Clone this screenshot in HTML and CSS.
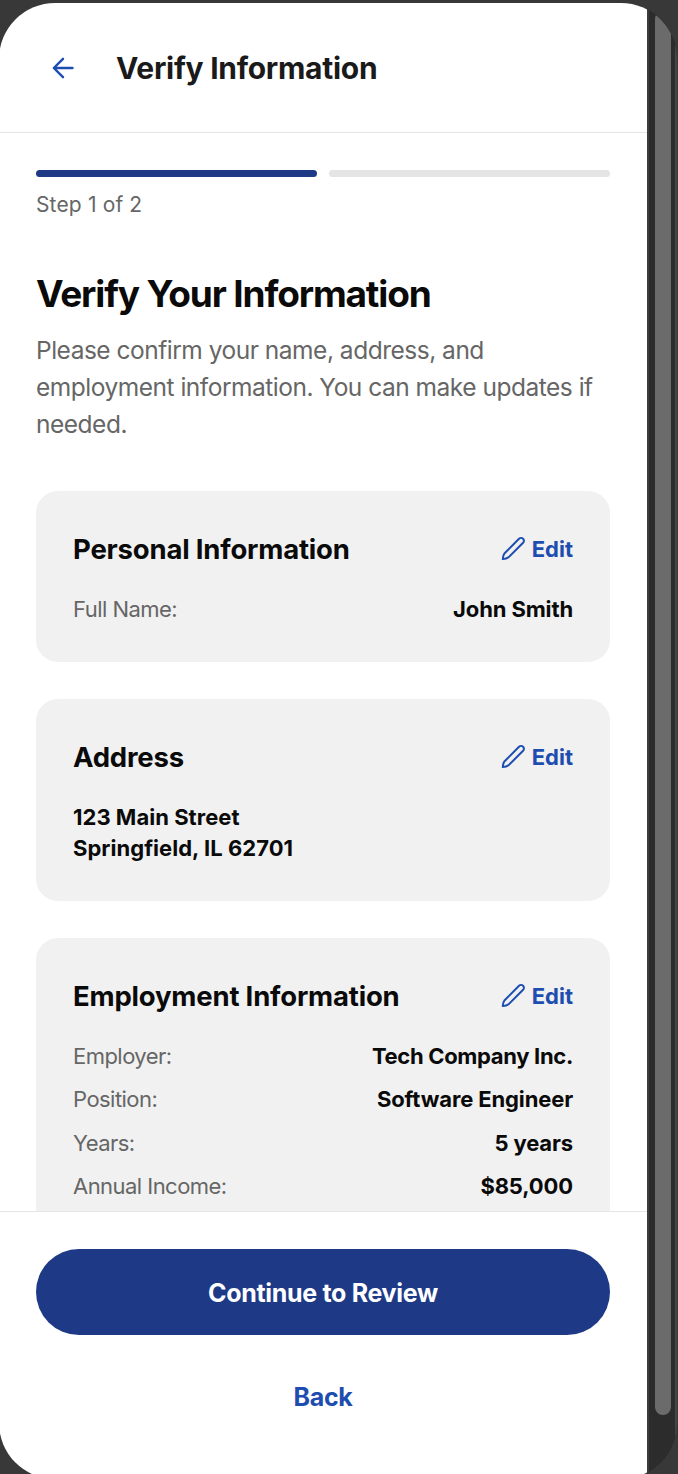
FILE: index.html
```html
<!DOCTYPE html>
<html lang="en">
<head>
<meta charset="utf-8">
<title>Verify Information</title>
<link rel="stylesheet" href="styles.css">
</head>
<body>
<svg class="defs" width="0" height="0"><symbol id="pencil" viewBox="0 0 24 24"><path d="M17.300 2.600a2.750 2.750 0 0 1 3.900 3.900L7.200 20.500Q5.400 22.100 1.700 22.200 1.800 18.600 3.500 16.500Z" fill="none" stroke="currentColor" stroke-width="1.900" stroke-linecap="round" stroke-linejoin="round"/></symbol></svg>
<div class="device">
  <div class="screen">
    <header class="header">
      <svg class="arrow" viewBox="0 0 22 22"><path d="M20.500 11H2M11 1.800 1.800 11l9.200 9.200" fill="none" stroke="currentColor" stroke-width="2.400" stroke-linecap="round" stroke-linejoin="round"/></svg>
      <span class="header-title">Verify Information</span>
    </header>
    <main class="content">
      <div class="progress"><span class="bar active"></span><span class="bar"></span></div>
      <div class="step">Step 1 of 2</div>
      <h1>Verify Your Information</h1>
      <p class="intro">Please confirm your name, address, and<br>employment information. You can make updates if<br>needed.</p>
      <section class="card personal">
        <div class="card-head"><h2>Personal Information</h2><a class="edit"><svg><use href="#pencil"/></svg>Edit</a></div>
        <div class="row"><span>Full Name:</span><b>John Smith</b></div>
      </section>
      <section class="card address">
        <div class="card-head"><h2>Address</h2><a class="edit"><svg><use href="#pencil"/></svg>Edit</a></div>
        <div class="lines"><b>123 Main Street</b><br><b>Springfield, IL 62701</b></div>
      </section>
      <section class="card employment">
        <div class="card-head"><h2>Employment Information</h2><a class="edit"><svg><use href="#pencil"/></svg>Edit</a></div>
        <div class="row"><span>Employer:</span><b class="employer">Tech Company Inc.</b></div>
        <div class="row"><span>Position:</span><b>Software Engineer</b></div>
        <div class="row"><span>Years:</span><b>5 years</b></div>
        <div class="row"><span>Annual Income:</span><b>$85,000</b></div>
      </section>
    </main>
    <footer class="footer">
      <button class="continue">Continue to Review</button>
      <a class="back">Back</a>
    </footer>
  </div>
  <div class="track"><div class="thumb"></div></div>
</div>
</body>
</html>
```
FILE: styles.css
```css
* { box-sizing: border-box; }
html { height: 1474px; overflow: hidden; background: #383838; }
body { margin: 0; height: 1474px; overflow: hidden; font-family: Inter, "Liberation Sans", sans-serif; color: #0a0a0a; }
h1, h2, p { margin: 0; }
.defs { display: block; height: 0; }
.device { display: flex; width: 678px; height: 1476px; margin: 3px 0 0 -1px; border-radius: 56px; overflow: hidden; background: #2c2c2c; }
.screen { flex: none; width: 648px; height: 100%; display: flex; flex-direction: column; background: #fff; }
.header { flex: none; height: 130px; border-bottom: 1px solid #e5e5e5; display: flex; align-items: center; padding-left: 53px; }
.arrow { width: 22px; height: 22px; color: #1e4db0; margin-right: 42px; }
.header-title { font-size: 30px; font-weight: 700; letter-spacing: -0.280px; color: #1a1a1a; white-space: nowrap; }
.content { flex: 1; min-height: 0; overflow: hidden; padding: 37px 37px 0 37px; }
.progress { display: flex; gap: 12px; }
.bar { flex: 1; height: 7px; border-radius: 4px; background: #e5e5e5; }
.active { background: #1e3a87; }
.step { font-size: 21px; line-height: 30px; margin-top: 13px; color: #666; letter-spacing: 0.150px; }
h1 { font-size: 37px; line-height: 46px; font-weight: 700; letter-spacing: -1.150px; margin-top: 51px; white-space: nowrap; }
.intro { font-size: 24.500px; line-height: 37px; margin-top: 15px; color: #666; white-space: nowrap; letter-spacing: -0.490px; }
.card { background: #f1f1f1; border-radius: 22px; padding: 36px 37px; margin-bottom: 37px; }
.personal { margin-top: 48px; height: 171px; }
.address { height: 202px; }
.employment { height: 330px; }
.card-head { display: flex; align-items: center; justify-content: space-between; height: 43px; margin-bottom: 18px; }
h2 { font-size: 27.500px; font-weight: 700; letter-spacing: -0.190px; white-space: nowrap; }
.edit { display: flex; align-items: center; gap: 6px; color: #1e4db0; font-size: 22px; font-weight: 700; letter-spacing: 0; }
.edit svg { width: 25px; height: 25px; }
.row { display: flex; justify-content: space-between; font-size: 22px; line-height: 43.300px; }
.row span { color: #666; letter-spacing: -0.540px; }
b { font-weight: 700; letter-spacing: -0.130px; }
.employer { letter-spacing: -0.320px; }
.lines { font-size: 22px; line-height: 31px; margin-top: 24px; }
.lines b { letter-spacing: 0.030px; }
.footer { flex: none; height: 268px; border-top: 1px solid #e5e5e5; padding: 37px 37px 0 37px; display: flex; flex-direction: column; align-items: center; }
.continue { width: 100%; height: 86px; border: 0; border-radius: 43px; background: #1e3a87; color: #fff; font: 700 25px Inter, sans-serif; letter-spacing: -0.320px; padding: 2px 0 0; }
.back { margin-top: 47px; font-size: 25px; line-height: 30px; font-weight: 700; color: #1e4db0; letter-spacing: -0.300px; }
.track { flex: 1; padding: 8px 0 0 6px; background: #2c2c2c; border-left: 2px solid #3c3c3c; border-right: 2px solid #464646; }
.thumb { width: 16px; height: 1404px; border-radius: 8px; background: #6b6b6b; }
```
